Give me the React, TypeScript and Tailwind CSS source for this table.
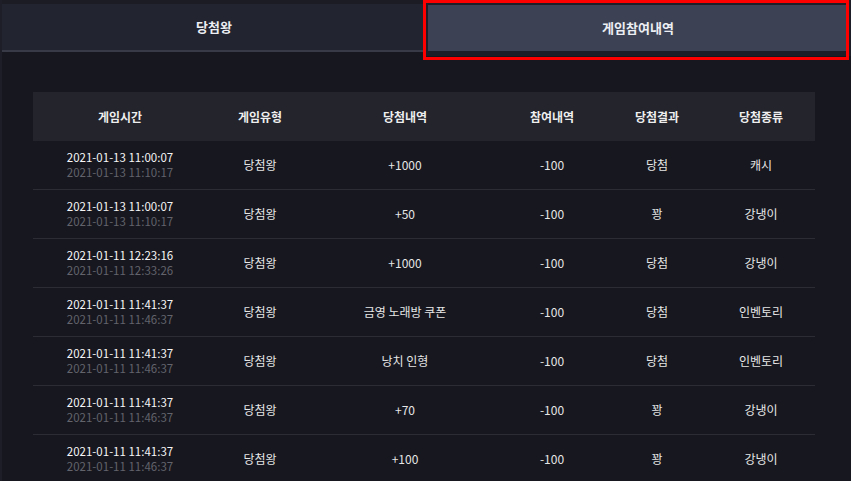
import React from "react";

type Row = {
  t1: string;
  t2: string;
  type: string;
  win: string;
  part: string;
  result: string;
  kind: string;
};

const rows: Row[] = [
  { t1: "2021-01-13 11:00:07", t2: "2021-01-13 11:10:17", type: "당첨왕", win: "+1000", part: "-100", result: "당첨", kind: "캐시" },
  { t1: "2021-01-13 11:00:07", t2: "2021-01-13 11:10:17", type: "당첨왕", win: "+50", part: "-100", result: "꽝", kind: "강냉이" },
  { t1: "2021-01-11 12:23:16", t2: "2021-01-11 12:33:26", type: "당첨왕", win: "+1000", part: "-100", result: "당첨", kind: "강냉이" },
  { t1: "2021-01-11 11:41:37", t2: "2021-01-11 11:46:37", type: "당첨왕", win: "금영 노래방 쿠폰", part: "-100", result: "당첨", kind: "인벤토리" },
  { t1: "2021-01-11 11:41:37", t2: "2021-01-11 11:46:37", type: "당첨왕", win: "낭치 인형", part: "-100", result: "당첨", kind: "인벤토리" },
  { t1: "2021-01-11 11:41:37", t2: "2021-01-11 11:46:37", type: "당첨왕", win: "+70", part: "-100", result: "꽝", kind: "강냉이" },
  { t1: "2021-01-11 11:41:37", t2: "2021-01-11 11:46:37", type: "당첨왕", win: "+100", part: "-100", result: "꽝", kind: "강냉이" },
];

const cols = "grid grid-cols-[174px_106px_184px_110px_100px_108px]";

export default function App() {
  return (
    <div
      className="relative w-[851px] h-[481px] overflow-hidden bg-[#17171f] border-l-2 border-[#1d1e28]"
      style={{ fontFamily: '"Noto Sans CJK KR", "Noto Sans", sans-serif' }}
    >
      {/* Tabs */}
      <div className="flex items-start h-[56px]">
        <div className="w-[424px] h-[52px] bg-[#1b1c24] pt-[4px]">
          <div className="h-[48px] bg-[#22242f] border-b-2 border-[#383a47] flex items-center justify-center text-[13px] font-bold text-[#eceef3]">
            당첨왕
          </div>
        </div>
        <div className="flex-1 h-[56px] bg-[#1d1e27] pt-[5px] pl-[2px] pr-[3px]">
          <div className="h-[46px] bg-[#3c4254] flex items-center justify-center text-[13px] font-bold text-[#eceef3]">
            게임참여내역
          </div>
        </div>
      </div>

      {/* Red highlight annotation */}
      <div className="pointer-events-none absolute left-[421px] top-0 w-[426px] h-[60px] border-[3px] border-[#ff0000]" />

      {/* Table */}
      <div className="mt-[36px] ml-[31px] w-[782px]">
        <div className={`${cols} h-[49px] bg-[#23242c] items-center text-[12px] font-bold text-[#eeeeee]`}>
          <div className="text-center">게임시간</div>
          <div className="text-center">게임유형</div>
          <div className="text-center">당첨내역</div>
          <div className="text-center">참여내역</div>
          <div className="text-center">당첨결과</div>
          <div className="text-center">당첨종류</div>
        </div>
        {rows.map((r, i) => (
          <div
            key={i}
            className={`${cols} h-[49px] items-center border-b border-[#2b2c34] text-[12px] text-[#e6e6e6]`}
          >
            <div className="flex flex-col items-center text-[11.5px] leading-[15px]">
              <span className="text-[#f6f6f6]">{r.t1}</span>
              <span className="text-[#62636b]">{r.t2}</span>
            </div>
            <div className="text-center">{r.type}</div>
            <div className="text-center">{r.win}</div>
            <div className="text-center">{r.part}</div>
            <div className="text-center">{r.result}</div>
            <div className="text-center">{r.kind}</div>
          </div>
        ))}
      </div>
    </div>
  );
}
